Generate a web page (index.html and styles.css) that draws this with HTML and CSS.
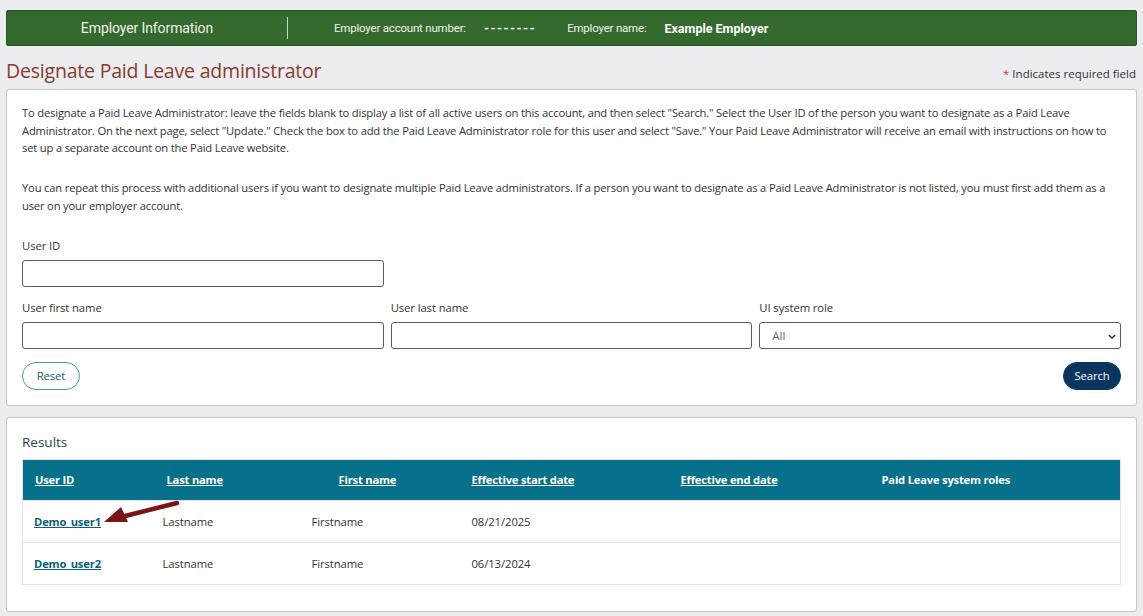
FILE: index.html
```html
<!DOCTYPE html>
<html lang="en">
<head>
<meta charset="utf-8">
<title>Designate Paid Leave administrator</title>
<link rel="stylesheet" href="styles.css">
</head>
<body>
<div class="page">
  <header class="emp-bar">
    <div class="emp-title">Employer Information</div>
    <div class="emp-divider"></div>
    <div class="emp-field"><span class="emp-label">Employer account number:</span><span class="emp-value dashes">--------</span></div>
    <div class="emp-field"><span class="emp-label">Employer name:</span><span class="emp-value">Example Employer</span></div>
  </header>

  <div class="title-row">
    <h1 class="page-title">Designate Paid Leave administrator</h1>
    <div class="req-note"><span class="req-star">*</span> Indicates required field</div>
  </div>

  <section class="panel search-panel">
    <p class="intro"><span class="ln">To designate a Paid Leave Administrator: leave the fields blank to display a list of all active users on this account, and then select "Search." Select the User ID of the person you want to designate as a Paid Leave</span><br><span class="ln">Administrator. On the next page, select "Update." Check the box to add the Paid Leave Administrator role for this user and select "Save." Your Paid Leave Administrator will receive an email with instructions on how to</span><br><span class="ln">set up a separate account on the Paid Leave website.</span></p>
    <p class="intro"><span class="ln">You can repeat this process with additional users if you want to designate multiple Paid Leave administrators. If a person you want to designate as a Paid Leave Administrator is not listed, you must first add them as a</span><br><span class="ln">user on your employer account.</span></p>

    <div class="form-grid">
      <label class="field">
        <span class="field-label">User ID</span>
        <input class="text-input" type="text">
      </label>
      <div></div>
      <div></div>
      <label class="field">
        <span class="field-label">User first name</span>
        <input class="text-input" type="text">
      </label>
      <label class="field">
        <span class="field-label">User last name</span>
        <input class="text-input" type="text">
      </label>
      <label class="field">
        <span class="field-label">UI system role</span>
        <span class="select-wrap">
          <select class="select-input"><option>All</option></select>
          <svg class="chev" viewBox="0 0 10 6" width="8" height="5"><path d="M1 1 L5 5 L9 1" fill="none" stroke="#333" stroke-width="1.8"/></svg>
        </span>
      </label>
    </div>

    <div class="actions">
      <button class="btn btn-outline" type="button">Reset</button>
      <button class="btn btn-primary" type="button">Search</button>
    </div>
  </section>

  <section class="panel results-panel">
    <h2 class="results-title">Results</h2>
    <div class="table-wrap">
      <table class="results">
        <colgroup>
          <col class="c1"><col class="c2"><col class="c3"><col class="c4"><col class="c5"><col class="c6">
        </colgroup>
        <thead>
          <tr>
            <th class="h1"><a href="#">User ID</a></th>
            <th class="h2"><a href="#">Last name</a></th>
            <th class="h3"><a href="#">First name</a></th>
            <th class="h4"><a href="#">Effective start date</a></th>
            <th class="h5"><a href="#">Effective end date</a></th>
            <th class="h6">Paid Leave system roles</th>
          </tr>
        </thead>
        <tbody>
          <tr>
            <td class="d1"><a class="user-link" href="#">Demo_user1</a></td>
            <td class="d2">Lastname</td>
            <td class="d3">Firstname</td>
            <td class="d4">08/21/2025</td>
            <td></td>
            <td></td>
          </tr>
          <tr>
            <td class="d1"><a class="user-link" href="#">Demo_user2</a></td>
            <td class="d2">Lastname</td>
            <td class="d3">Firstname</td>
            <td class="d4">06/13/2024</td>
            <td></td>
            <td></td>
          </tr>
        </tbody>
      </table>
      <svg class="arrow" viewBox="0 0 80 26" width="80" height="26" aria-hidden="true">
        <path d="M74 3 L18 17" stroke="#7b1414" stroke-width="4.5" stroke-linecap="round" fill="none"/>
        <polygon points="1,22 18,7 25,22" fill="#7b1414"/>
      </svg>
    </div>
  </section>
</div>
</body>
</html>
```

FILE: styles.css
```css
* { box-sizing: border-box; }

html, body {
  margin: 0;
  padding: 0;
  background: #ecedf1;
  font-family: "Open Sans", "Noto Sans", Arial, sans-serif;
  color: #333;
}

.page {
  padding: 10px 6px 6px 6px;
}

/* Employer header bar */
.emp-bar {
  height: 36px;
  background: #356a2f;
  border: 1px solid #2b5526;
  border-radius: 2px;
  display: flex;
  align-items: center;
  font-family: Roboto, "Open Sans", sans-serif;
  color: #eef2ec;
}

.emp-title {
  width: 280px;
  text-align: center;
  font-size: 14px;
  letter-spacing: -0.1px;
}

.emp-divider {
  width: 1px;
  height: 22px;
  background: #c9d6c5;
  margin-right: 46px;
}

.emp-field {
  display: flex;
  align-items: center;
  margin-right: 31px;
  font-size: 11.5px;
}

.emp-label {
  margin-right: 18px;
  letter-spacing: -0.2px;
}

.emp-value {
  font-weight: 700;
  font-size: 12.5px;
  color: #ffffff;
  letter-spacing: 0;
}

.dashes {
  letter-spacing: 1.4px;
  font-size: 13px;
}

/* Title row */
.title-row {
  display: flex;
  align-items: flex-end;
  justify-content: space-between;
  margin-top: 14px;
  height: 22px;
}

.page-title {
  margin: 0;
  font-size: 19.5px;
  font-weight: 400;
  color: #8a3b2a;
  letter-spacing: -0.2px;
  line-height: 22px;
}

.req-note {
  font-size: 11.5px;
  color: #333;
  line-height: 16px;
  margin-right: 1px;
}

.req-star {
  color: #d9302c;
}

/* Panels */
.panel {
  background: #ffffff;
  border: 1px solid #c4c6ca;
  border-radius: 3px;
}

.search-panel {
  margin-top: 7px;
  padding: 14px 15px 15px 15px;
}

.intro {
  margin: 0 0 22.5px 0;
  font-size: 11.2px;
  line-height: 17.5px;
  letter-spacing: -0.17px;
  color: #333;
}

.ln {
  white-space: nowrap;
}

.form-grid {
  display: grid;
  grid-template-columns: repeat(3, 1fr);
  column-gap: 7px;
  row-gap: 12px;
}

.field {
  display: flex;
  flex-direction: column;
}

.field-label {
  font-size: 11.3px;
  line-height: 17px;
  margin-bottom: 6px;
  color: #333;
  letter-spacing: -0.1px;
}

.text-input,
.select-input {
  height: 27px;
  border: 1px solid #5a5a5a;
  border-radius: 3px;
  background: #fff;
  font-family: "Open Sans", sans-serif;
  font-size: 11.5px;
  padding: 0 8px;
  width: 100%;
}

.select-wrap {
  position: relative;
  display: block;
}

.select-input {
  appearance: none;
  -webkit-appearance: none;
  color: #666;
  padding-left: 12px;
}

.chev {
  position: absolute;
  right: 5px;
  top: 12px;
}

.actions {
  display: flex;
  justify-content: space-between;
  margin-top: 13px;
}

.btn {
  height: 28px;
  border-radius: 14px;
  font-family: "Open Sans", sans-serif;
  font-size: 11.3px;
  padding: 0;
  cursor: pointer;
  letter-spacing: -0.1px;
}

.btn-outline {
  background: #fff;
  border: 1px solid #4b98ab;
  color: #1e5a6b;
  width: 58px;
}

.btn-primary {
  background: #0a355e;
  border: 1px solid #0a355e;
  color: #fff;
  width: 58px;
}

/* Results */
.results-panel {
  margin-top: 11px;
  padding: 14px 15px 26px 15px;
}

.results-title {
  margin: 0 0 7px 0;
  font-size: 13.5px;
  font-weight: 400;
  color: #1e4a53;
  line-height: 20px;
}

.table-wrap {
  position: relative;
}

.results {
  width: 100%;
  border-collapse: collapse;
  table-layout: fixed;
  border: 1px solid #e2e3e5;
  font-size: 11.3px;
}

.c1 { width: 130px; }
.c2 { width: 150px; }
.c3 { width: 160px; }
.c4 { width: 210px; }
.c5 { width: 200px; }
.c6 { width: auto; }

.results thead tr {
  background: #07708a;
  height: 41px;
}

.results th {
  text-align: left;
  font-weight: 700;
  color: #fff;
  font-size: 11.2px;
  letter-spacing: -0.2px;
  padding: 0;
}

.results th a {
  color: #fff;
  text-decoration: underline;
}

.h1 { padding-left: 12px !important; }
.h2 { padding-left: 14px !important; }
.h3 { padding-left: 36px !important; }
.h4 { padding-left: 9px !important; }
.h5 { padding-left: 8px !important; }
.h6 { padding-left: 9px !important; }

.results tbody tr {
  height: 42px;
  border-top: 1px solid #e6e7e9;
}

.results td {
  padding: 0;
  color: #333;
  letter-spacing: -0.1px;
}

.d1 { padding-left: 11px !important; }
.d2 { padding-left: 10px !important; }
.d3 { padding-left: 9px !important; }
.d4 { padding-left: 9px !important; }

.user-link {
  color: #0b5f78;
  font-weight: 700;
  text-decoration: underline;
  font-size: 11.2px;
  letter-spacing: -0.15px;
}

.arrow {
  position: absolute;
  left: 81px;
  top: 41px;
}
```
